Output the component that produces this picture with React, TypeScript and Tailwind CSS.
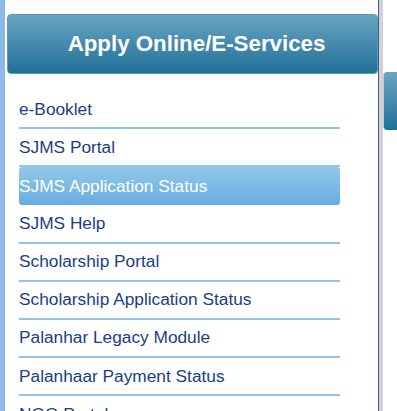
import React from "react";

const items = [
  "e-Booklet",
  "SJMS Portal",
  "SJMS Application Status",
  "SJMS Help",
  "Scholarship Portal",
  "Scholarship Application Status",
  "Palanhar Legacy Module",
  "Palanhaar Payment Status",
  "NGO Portal",
];

const activeItem = "SJMS Application Status";

export default function App() {
  return (
    <div
      className="flex h-screen w-full overflow-hidden bg-white"
      style={{ fontFamily: '"Liberation Sans", Arial, sans-serif' }}
    >
      <div className="w-[5px] shrink-0 bg-[#8cb9e8]" />

      <div className="w-[374px] shrink-0 border-r border-[#3b5b9c] pl-[2px]">
        <div className="mt-[14px] flex h-[60px] items-center justify-center rounded-[4px] border border-[#5d97b4] bg-gradient-to-b from-[#67a5c2] to-[#1d7098] pl-[8px] text-[22.3px] font-bold text-white">
          Apply Online/E-Services
        </div>

        <ul className="ml-[12px] mt-[17px] w-[321px]">
          {items.map((item) => {
            const active = item === activeItem;
            return (
              <li
                key={item}
                className={
                  active
                    ? "flex h-[38.15px] items-center rounded-[3px] bg-gradient-to-b from-[#93c8e8] to-[#66ade0] pt-[1px] text-[17.3px] text-white"
                    : "flex h-[38.15px] items-center border-b-2 border-[#8fc5ea] pt-[1px] text-[17.3px] text-[#1b3e86]"
                }
              >
                {item}
              </li>
            );
          })}
        </ul>
      </div>

      <div className="w-[4px] shrink-0 bg-[#d2d2d2]" />

      <div className="flex-1">
        <div className="mt-[72px] h-[58px] rounded-l-[4px] border-l border-[#c8c8c8] bg-gradient-to-b from-[#67a5c2] to-[#1d7098]" />
      </div>
    </div>
  );
}
